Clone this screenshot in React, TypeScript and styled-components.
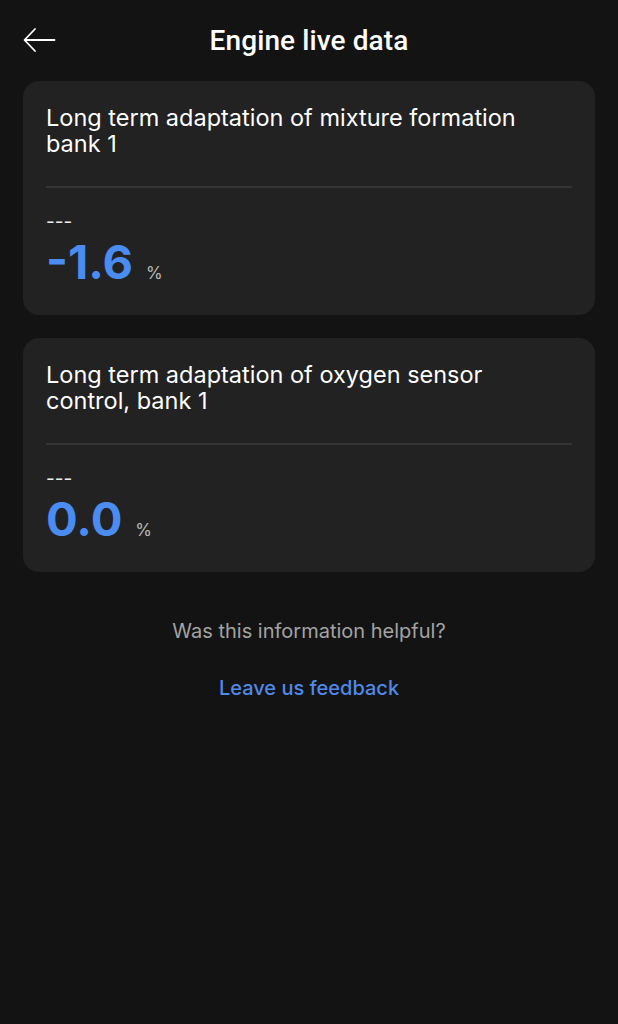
import React from "react";
import styled, { createGlobalStyle } from "styled-components";

const Global = createGlobalStyle`
  html, body { margin: 0; padding: 0; background: #131313; }
  body { font-family: Inter, "Noto Sans", sans-serif; -webkit-font-smoothing: antialiased; }
`;

const Page = styled.div`
  min-height: 1024px;
  background: #131313;
  color: #fff;
  display: flex;
  flex-direction: column;
`;

const Header = styled.header`
  height: 81px;
  display: grid;
  grid-template-columns: 80px 1fr 80px;
  align-items: center;
  padding-bottom: 1px;
  box-sizing: border-box;
`;

const BackButton = styled.button`
  background: none;
  border: 0;
  padding: 0 0 0 23px;
  height: 40px;
  display: flex;
  align-items: center;
  color: #fff;
  cursor: pointer;
`;

const Title = styled.h1`
  margin: 0;
  text-align: center;
  font-family: Roboto, "Noto Sans", sans-serif;
  font-weight: 500;
  font-size: 28px;
  letter-spacing: 0.1px;
  color: #fff;
`;

const List = styled.div`
  display: flex;
  flex-direction: column;
  gap: 23px;
  padding: 0 23px;
`;

const Card = styled.section`
  background: #222222;
  border-radius: 16px;
  padding: 24px 23px 28px 23px;
  display: flex;
  flex-direction: column;
`;

const CardTitle = styled.div`
  font-size: 23.5px;
  line-height: 26px;
  color: #fff;
  font-weight: 400;
`;

const Divider = styled.div`
  height: 2px;
  background: #343434;
  margin: 29px 0 22px;
`;

const Dashes = styled.div`
  font-size: 19px;
  line-height: 24px;
  color: #ececec;
`;

const ValueRow = styled.div`
  display: flex;
  align-items: baseline;
  gap: 13px;
  margin-top: 3px;
`;

const Value = styled.span`
  font-size: 47px;
  line-height: 50px;
  font-weight: 700;
  color: #4a8cf0;
  letter-spacing: 0px;
`;

const Unit = styled.span`
  font-size: 17px;
  color: #b8b8b8;
`;

const Footer = styled.div`
  display: flex;
  flex-direction: column;
  align-items: center;
  margin-top: 47px;
  gap: 33px;
`;

const Question = styled.div`
  font-size: 20px;
  line-height: 24px;
  color: #a3a3a3;
`;

const FeedbackLink = styled.a`
  font-size: 20px;
  line-height: 24px;
  font-weight: 500;
  color: #4f8ae8;
  text-decoration: none;
`;

const items = [
  { title: "Long term adaptation of mixture formation bank 1", value: "-1.6", unit: "%" },
  { title: "Long term adaptation of oxygen sensor control, bank 1", value: "0.0", unit: "%" },
];

export default function App() {
  return (
    <Page>
      <Global />
      <Header>
        <BackButton aria-label="Back">
          <svg width="33" height="26" viewBox="0 0 33 26" fill="none" stroke="#fff" strokeWidth="1.8" strokeLinecap="round" strokeLinejoin="round">
            <path d="M31.5 13H2" />
            <path d="M12 2L1.5 13L12 24" />
          </svg>
        </BackButton>
        <Title>Engine live data</Title>
        <div />
      </Header>
      <List>
        {items.map((it) => (
          <Card key={it.title}>
            <CardTitle>{it.title}</CardTitle>
            <Divider />
            <Dashes>---</Dashes>
            <ValueRow>
              <Value>{it.value}</Value>
              <Unit>{it.unit}</Unit>
            </ValueRow>
          </Card>
        ))}
      </List>
      <Footer>
        <Question>Was this information helpful?</Question>
        <FeedbackLink href="#">Leave us feedback</FeedbackLink>
      </Footer>
    </Page>
  );
}
